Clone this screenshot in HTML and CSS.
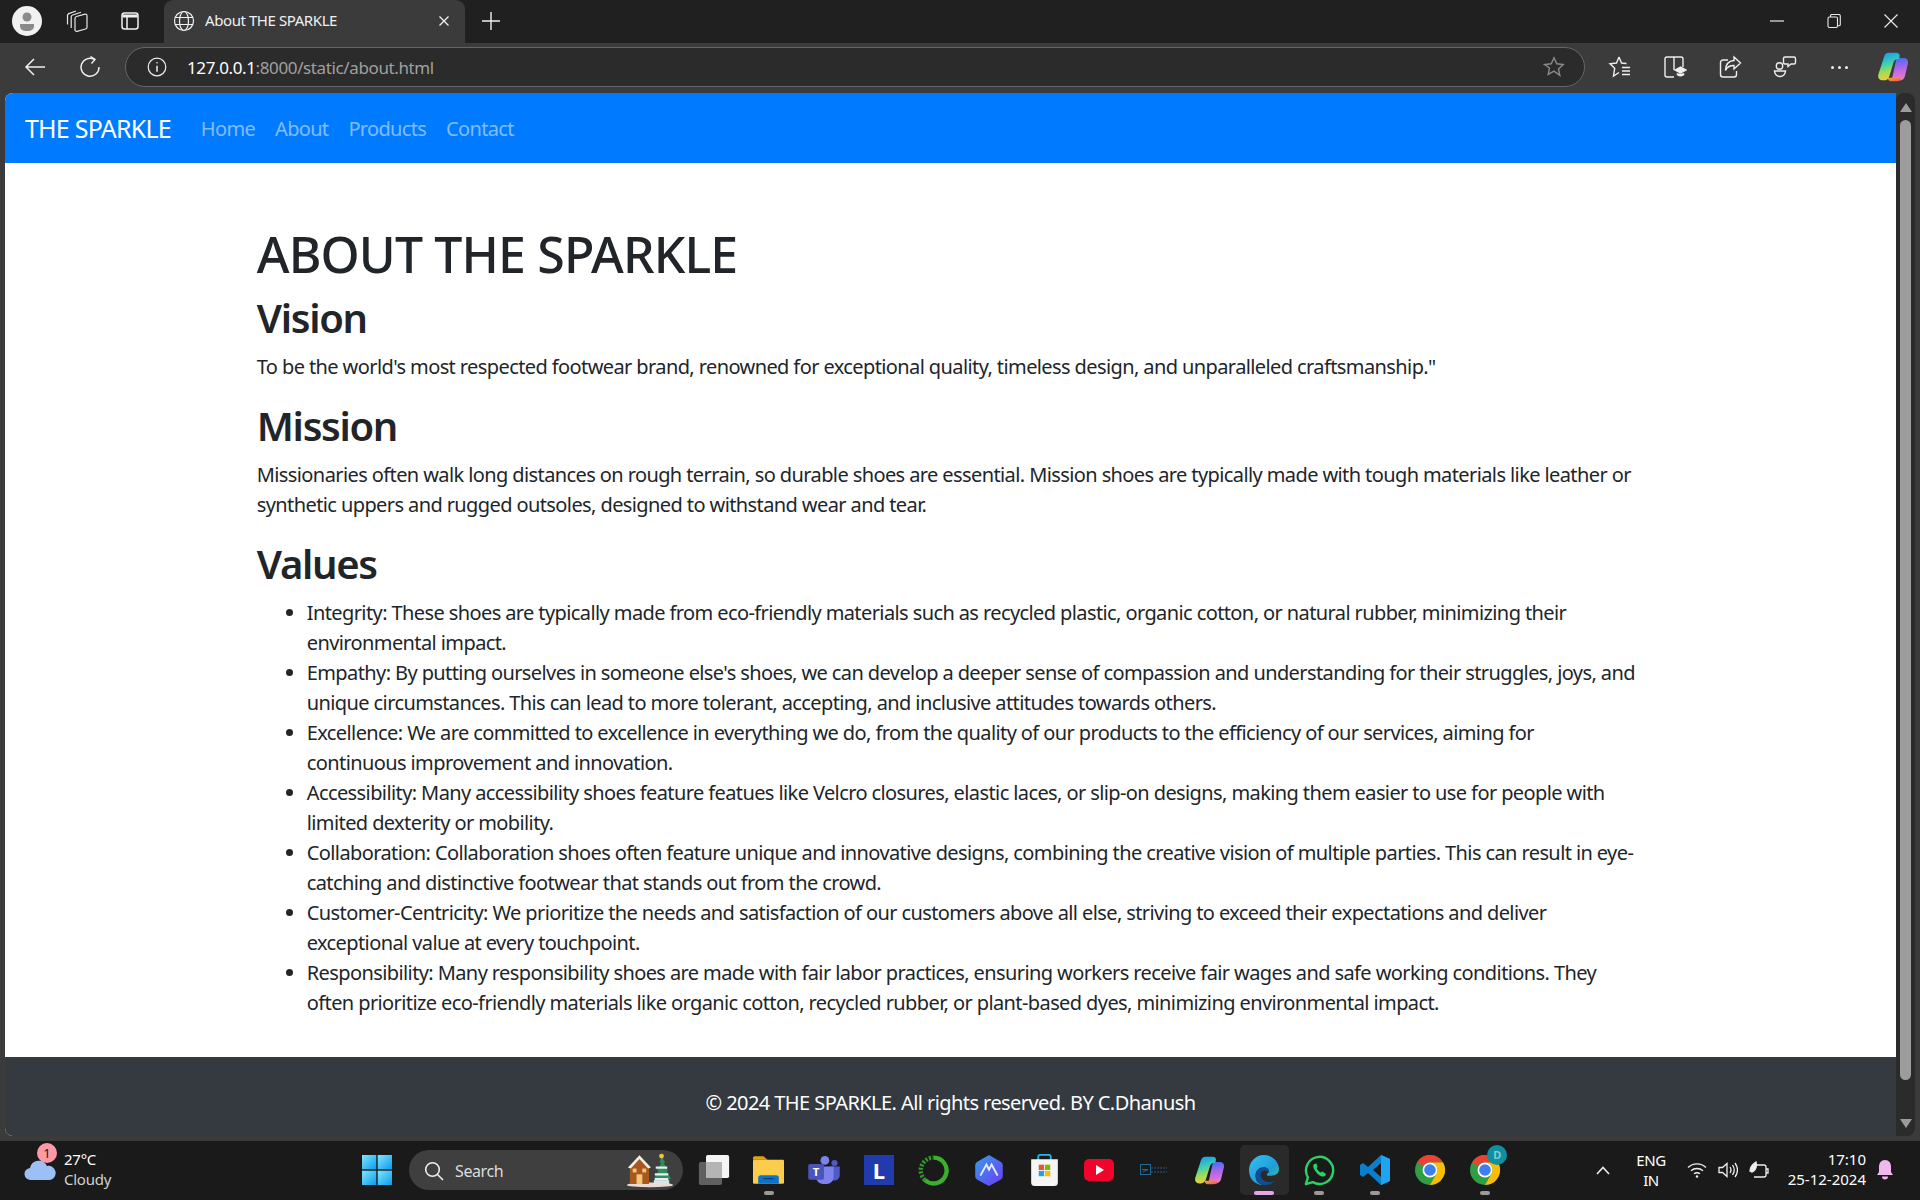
FILE: index.html
```html
<!DOCTYPE html>
<html lang="en">
<head>
<meta charset="utf-8">
<title>About THE SPARKLE</title>
<link rel="stylesheet" href="styles.css">
</head>
<body>
<svg class="defs" width="0" height="0" aria-hidden="true">
  <defs>
    <linearGradient id="cpA" x1="0.3" y1="0" x2="0.5" y2="1"><stop offset="0" stop-color="#1a9bf0"/><stop offset=".4" stop-color="#3fd0b0"/><stop offset=".7" stop-color="#a6dc50"/><stop offset="1" stop-color="#f8c83a"/></linearGradient>
    <linearGradient id="cpB" x1="0.5" y1="0" x2="0.6" y2="1"><stop offset="0" stop-color="#4a6cf0"/><stop offset=".5" stop-color="#b866e8"/><stop offset="1" stop-color="#f07fc0"/></linearGradient>
    <linearGradient id="cpC" x1="0" y1="0" x2="1" y2="1"><stop offset="0" stop-color="#f7a73a"/><stop offset="1" stop-color="#f0504f"/></linearGradient>
    <linearGradient id="edgeA" x1="0" y1="0" x2="1" y2="1"><stop offset="0" stop-color="#35c1f1"/><stop offset=".6" stop-color="#1f9cd8"/><stop offset="1" stop-color="#3bd27f"/></linearGradient>
    <linearGradient id="winG" x1="0" y1="0" x2="1" y2="1"><stop offset="0" stop-color="#7fe7fb"/><stop offset="1" stop-color="#0a9bf0"/></linearGradient>
    <linearGradient id="hexG" x1="0" y1="0" x2="1" y2="1"><stop offset="0" stop-color="#3a9bf0"/><stop offset="1" stop-color="#6a3cf0"/></linearGradient>
    <symbol id="copilot" viewBox="0 0 36 36">
      <path d="M22 8h8c3.500 0 5.500 2.500 4.800 6l-3.300 14c-.7 3-3 5-6 5h-9z" fill="url(#cpB)"/>
      <path d="M12 30h13c2 0 2.500 3 .5 3.500-1 .3-2 .5-3 .5h-7c-2 0-3-2-3.500-4z" fill="url(#cpC)"/>
      <path d="M13 2h9c2.500 0 3.500 1.500 3.500 3.500 0 1-.5 2.500-1 3.500-3-.5-5 1-6 4l-4.500 15c-.8 3-3 5-6 5H6c-3.500 0-5.500-3-4.500-6.500L8 6.500C8.800 3.500 10.500 2 13 2z" fill="url(#cpA)"/>
    </symbol>
    <symbol id="chrome" viewBox="0 0 30 30">
      <circle cx="15" cy="15" r="15" fill="#2f9e44"/>
      <path d="M15 0a15 15 0 0 1 13 7.500H15a7.500 7.500 0 0 0-6.500 3.750L2 7.500A15 15 0 0 1 15 0z" fill="#ea4335"/>
      <path d="M28 7.500A15 15 0 0 1 15 30l6.500-11.250A7.500 7.500 0 0 0 15 7.500z" fill="#fbbc04"/>
      <circle cx="15" cy="15" r="7.500" fill="#fff"/>
      <circle cx="15" cy="15" r="5.800" fill="#3b7ff0"/>
    </symbol>
  </defs>
</svg>

<div class="tabbar">
  <div class="tab-left">
    <span class="avatar"><svg viewBox="0 0 30 30" width="30" height="30"><circle cx="15" cy="15" r="15" fill="#f1f1f1"/><circle cx="15" cy="11" r="4.500" fill="#8a8a8a"/><path d="M8 18h14v2a5 5 0 0 1-5 5h-4a5 5 0 0 1-5-5z" fill="#8a8a8a"/></svg></span>
    <span class="tb-btn coll"><svg viewBox="0 0 24 24" width="24" height="24" fill="none" stroke="#e6e6e6" stroke-width="1.200"><path d="M10 9.500a2 2 0 0 1 1.500-2L20 5.200a1.500 1.500 0 0 1 2 1.500V18a2 2 0 0 1-1.500 2L12 22.300a1.500 1.500 0 0 1-2-1.500z"/><path d="M6.200 19V8a2 2 0 0 1 1.500-2L16 3.200"/><path d="M2.500 15.500V6.500a2 2 0 0 1 1.300-1.900L11 2"/></svg></span>
    <span class="tb-btn vtabs"><svg viewBox="0 0 20 20" width="20" height="20" fill="none" stroke="#f0f0f0" stroke-width="1.500"><rect x="2" y="2" width="16" height="16" rx="2.500"/><path d="M2.500 5h15" stroke-width="3"/><path d="M7 6v12"/></svg></span>
  </div>
  <div class="tab">
    <svg class="globe" viewBox="0 0 22 22" width="22" height="22" fill="none" stroke="#f0f0f0" stroke-width="1.200"><circle cx="11" cy="11" r="9.500"/><ellipse cx="11" cy="11" rx="4.500" ry="9.500"/><path d="M2 7.500h18M2 14.500h18"/></svg>
    <span class="tab-title">About THE SPARKLE</span>
    <svg class="tab-x" viewBox="0 0 12 12" width="12" height="12" stroke="#f0f0f0" stroke-width="1.300"><path d="M1.500 1.500l9 9M10.500 1.500l-9 9"/></svg>
  </div>
  <svg class="new-tab" viewBox="0 0 18 18" width="18" height="18" stroke="#f0f0f0" stroke-width="1.400"><path d="M9 0v18M0 9h18"/></svg>
  <div class="win-ctrl">
    <svg viewBox="0 0 14 14" width="14" height="14" stroke="#e8e8e8" stroke-width="1.200"><path d="M0 7h14"/></svg>
    <svg viewBox="0 0 14 14" width="14" height="14" fill="none" stroke="#e8e8e8" stroke-width="1.100"><rect x="1" y="3" width="9.500" height="10.500" rx="1.500"/><path d="M3.500 3V1.800A1.300 1.300 0 0 1 4.800.5h7a1.500 1.500 0 0 1 1.500 1.500v8.500a1.300 1.300 0 0 1-1.300 1.300h-1.500"/></svg>
    <svg viewBox="0 0 14 14" width="14" height="14" stroke="#e8e8e8" stroke-width="1.200"><path d="M.5.500l13 13M13.500.500l-13 13"/></svg>
  </div>
</div>

<div class="toolbar">
  <svg class="back" viewBox="0 0 22 22" width="22" height="22" fill="none" stroke="#f0f0f0" stroke-width="1.500"><path d="M21 11H2M10 3l-8 8 8 8"/></svg>
  <svg class="reload" viewBox="0 0 22 22" width="22" height="22" fill="none" stroke="#f0f0f0" stroke-width="1.400"><path d="M15.500 3.500A9 9 0 1 0 20 11"/><path d="M11.500.500l4.500 3-3.500 4"/></svg>
  <div class="address">
    <svg class="info" viewBox="0 0 20 20" width="20" height="20" fill="none" stroke="#eee" stroke-width="1.200"><circle cx="10" cy="10" r="8.800"/><path d="M10 8.800v6" stroke-width="1.500"/><circle cx="10" cy="5.800" r=".8" fill="#eee" stroke="none"/></svg>
    <span class="url"><span class="url-host">127.0.0.1</span>:8000/static/about.html</span>
    <svg class="star" viewBox="0 0 22 22" width="22" height="22" fill="none" stroke="#8a8a8a" stroke-width="1.400"><path d="M11 1.800l2.800 6 6.400.8-4.700 4.400 1.300 6.400L11 15.200 5.200 18.400l1.300-6.400L1.800 8.600l6.400-.8z"/></svg>
  </div>
  <div class="tools">
    <svg viewBox="0 0 24 24" width="24" height="24" fill="none" stroke="#eee" stroke-width="1.400"><path d="M11 2l2.500 6 5 .5M11 2L8.500 8 2 8.800l4.700 4.400L5.500 21 11 17.500"/><path d="M14 12.500h8M14 16h8M14 19.500h8"/></svg>
    <svg viewBox="0 0 24 24" width="24" height="24" fill="none" stroke="#eee" stroke-width="1.400"><path d="M11 22H4a2 2 0 0 1-2-2V4a2 2 0 0 1 2-2h14a2 2 0 0 1 2 2v8M11 2v13"/><path d="M12 15l5.500-3 5.500 3-5.500 3z" fill="#eee"/><path d="M14 18.500c1 3 6 3 7 0" fill="#eee"/></svg>
    <svg viewBox="0 0 24 24" width="24" height="24" fill="none" stroke="#eee" stroke-width="1.400"><path d="M10 5H5a2.500 2.500 0 0 0-2.500 2.500v12A2.500 2.500 0 0 0 5 22h11a2.500 2.500 0 0 0 2.500-2.500V16"/><path d="M16 2l6.500 6-6.500 6v-3.500c-4 0-7 1-8.500 5 0-6 3-9.500 8.500-10z"/></svg>
    <svg viewBox="0 0 24 24" width="24" height="24" fill="none" stroke="#eee" stroke-width="1.400"><circle cx="6.500" cy="11" r="3.200"/><path d="M1.500 16h11a5.500 5.500 0 0 1-11 0zM12 2h9a1.500 1.500 0 0 1 1.500 1.500v4A1.500 1.500 0 0 1 21 9h-3l-3 2.500V9h-3a1.500 1.500 0 0 1-1.500-1.500v-4A1.500 1.500 0 0 1 12 2z"/></svg>
    <span class="dots"><i></i><i></i><i></i></span>
    <svg class="copilot" width="32" height="32"><use href="#copilot"/></svg>
  </div>
</div>

<div class="viewport">
  <div class="page">
    <nav class="navbar">
      <a class="brand">THE SPARKLE</a>
      <a class="nav-link">Home</a>
      <a class="nav-link">About</a>
      <a class="nav-link">Products</a>
      <a class="nav-link">Contact</a>
    </nav>
    <main class="container">
      <h1>ABOUT THE SPARKLE</h1>
      <h2>Vision</h2>
      <p>To be the world's most respected footwear brand, renowned for exceptional quality, timeless design, and unparalleled craftsmanship."</p>
      <h2>Mission</h2>
      <p>Missionaries often walk long distances on rough terrain, so durable shoes are essential. Mission shoes are typically made with tough materials like leather or synthetic uppers and rugged outsoles, designed to withstand wear and tear.</p>
      <h2>Values</h2>
      <ul>
        <li>Integrity: These shoes are typically made from eco-friendly materials such as recycled plastic, organic cotton, or natural rubber, minimizing their environmental impact.</li>
        <li>Empathy: By putting ourselves in someone else's shoes, we can develop a deeper sense of compassion and understanding for their struggles, joys, and unique circumstances. This can lead to more tolerant, accepting, and inclusive attitudes towards others.</li>
        <li>Excellence: We are committed to excellence in everything we do, from the quality of our products to the efficiency of our services, aiming for continuous improvement and innovation.</li>
        <li>Accessibility: Many accessibility shoes feature featues like Velcro closures, elastic laces, or slip-on designs, making them easier to use for people with limited dexterity or mobility.</li>
        <li>Collaboration: Collaboration shoes often feature unique and innovative designs, combining the creative vision of multiple parties. This can result in eye-catching and distinctive footwear that stands out from the crowd.</li>
        <li>Customer-Centricity: We prioritize the needs and satisfaction of our customers above all else, striving to exceed their expectations and deliver exceptional value at every touchpoint.</li>
        <li>Responsibility: Many responsibility shoes are made with fair labor practices, ensuring workers receive fair wages and safe working conditions. They often prioritize eco-friendly materials like organic cotton, recycled rubber, or plant-based dyes, minimizing environmental impact.</li>
      </ul>
    </main>
    <footer class="footer">© 2024 THE SPARKLE. All rights reserved. BY C.Dhanush</footer>
  </div>
  <div class="scrollbar">
    <span class="arrow-up"></span>
    <span class="thumb"></span>
    <span class="arrow-down"></span>
  </div>
</div>

<div class="taskbar">
  <div class="weather">
    <span class="cloud-wrap">
      <svg viewBox="0 0 32 24" width="32" height="24"><path d="M7 22a6 6 0 0 1-1-12 9 9 0 0 1 17-2 7 7 0 0 1 3 14z" fill="#9cc0f5"/></svg>
      <span class="badge">1</span>
    </span>
    <span class="weather-text"><span class="temp">27°C</span><span class="cond">Cloudy</span></span>
  </div>
  <div class="center">
    <svg class="win" viewBox="0 0 30 30" width="30" height="30"><rect width="14.300" height="14.300" fill="url(#winG)"/><rect x="15.700" width="14.300" height="14.300" fill="url(#winG)"/><rect y="15.700" width="14.300" height="14.300" fill="url(#winG)"/><rect x="15.700" y="15.700" width="14.300" height="14.300" fill="url(#winG)"/></svg>
    <div class="search">
      <svg viewBox="0 0 20 20" width="20" height="20" fill="none" stroke="#eee" stroke-width="1.600"><circle cx="8.500" cy="8.500" r="6.800"/><path d="M13.500 13.500l5.500 5.500"/></svg>
      <span class="search-text">Search</span>
      <svg class="xmas" viewBox="0 0 50 36" width="48" height="35"><ellipse cx="25" cy="33" rx="24" ry="2.500" fill="#e8dcd8"/><path d="M4 14L14 3l10 11v18H4z" fill="#a8581f"/><path d="M2 15L14 2l12 13-3 1-9-10-9 10z" fill="#eef0ea"/><rect x="11" y="22" width="6" height="10" fill="#f4c77a"/><rect x="7" y="16" width="4" height="4" fill="#f4c77a"/><rect x="17" y="16" width="4" height="4" fill="#f4c77a"/><path d="M37 3l4 7h-2l5 8h-2l5 9H29l5-9h-2l5-8h-2z" fill="#2f8f5a"/><path d="M31 15h12M30 22h14M30 27h14" stroke="#e5eef0" stroke-width="2.500"/><circle cx="37" cy="3" r="2.500" fill="#f2c33a"/><rect x="29" y="28" width="16" height="4" fill="#d8e6ea"/></svg>
    </div>
    <div class="apps">
      <span class="app"><svg viewBox="0 0 36 36" width="32" height="32"><rect x="1" y="9" width="26" height="26" rx="2" fill="#5f5f5f"/><rect x="9" y="1" width="26" height="26" rx="2" fill="#f4f4f4"/><rect x="9" y="9" width="18" height="18" fill="#b4b4b4"/></svg></span>
      <span class="app"><svg viewBox="0 0 36 32" width="31" height="28"><path d="M0 2a2 2 0 0 1 2-2h10l5 4H0z" fill="#dba31a"/><rect y="4" width="36" height="28" rx="1.500" fill="#fccc4d"/><path d="M6 32v-7a3 3 0 0 1 3-3h18a3 3 0 0 1 3 3v7z" fill="#0a74c8"/><path d="M12 26h12" stroke="#063f78" stroke-width="1.500"/></svg><i class="pip"></i></span>
      <span class="app"><svg viewBox="0 0 36 32" width="32" height="28"><circle cx="19" cy="5" r="5" fill="#7b83eb"/><circle cx="30" cy="8" r="3.500" fill="#5059c9"/><path d="M25 12h11v10a6 6 0 0 1-6 6h-5z" fill="#5059c9"/><path d="M9 12h20v12a8 8 0 0 1-8 8h-4a8 8 0 0 1-8-8z" fill="#7b83eb"/><rect y="9" width="18" height="18" rx="2" fill="#4b53bc"/><text class="teams-t" x="9" y="23">T</text></svg></span>
      <span class="app"><span class="app-l">L</span></span>
      <span class="app"><svg viewBox="0 0 36 36" width="31" height="31" fill="none"><path d="M18 3a15 15 0 1 1-10 26" stroke="#3ab02e" stroke-width="5"/><path d="M8 29A15 15 0 0 1 18 3" stroke="#2f9a2a" stroke-width="5" stroke-dasharray="2.500 1.800"/></svg></span>
      <span class="app"><svg viewBox="0 0 32 36" width="28" height="31"><path d="M16 0l13 7.500q3 1.500 3 4V25q0 2.500-3 4L16 36 3 29q-3-1.500-3-4V11.500q0-2.500 3-4z" fill="url(#hexG)"/><path d="M6 24L13 11l3 6 3-6 7 13" fill="none" stroke="#e8ecff" stroke-width="2.200"/></svg></span>
      <span class="app"><svg viewBox="0 0 30 36" width="27" height="32"><path d="M8 8V3a2 2 0 0 1 2-2h10a2 2 0 0 1 2 2v5" fill="none" stroke="#27b5ea" stroke-width="2"/><path d="M0 6h30v26a4 4 0 0 1-4 4H4a4 4 0 0 1-4-4z" fill="#f6f6f6"/><rect x="8.500" y="12" width="6" height="6" fill="#e25a2a"/><rect x="15.500" y="12" width="6" height="6" fill="#7fba00"/><rect x="8.500" y="19" width="6" height="6" fill="#1ea2ea"/><rect x="15.500" y="19" width="6" height="6" fill="#ffb900"/></svg></span>
      <span class="app"><svg viewBox="0 0 30 22" width="30" height="22"><rect width="30" height="22" rx="5" fill="#f0042c"/><path d="M12 6l8 5-8 5z" fill="#fff"/></svg></span>
      <span class="app"><svg viewBox="0 0 28 12" width="28" height="12" fill="none" stroke="#1f6a96" stroke-width="1"><rect x=".5" y=".5" width="10" height="10"/><path d="M2 5.500h6M3 8l5-2.500"/><path d="M11 4h16M11 8h16" stroke="#27364a" stroke-width="2" stroke-dasharray="2 1"/></svg></span>
      <span class="app"><svg width="31" height="31"><use href="#copilot"/></svg></span>
      <span class="app app-active"><svg viewBox="0 0 32 32" width="30" height="30"><path d="M16 0a16 16 0 0 1 16 15c0 5-4 7-8 7h-3c-2 0-3-1-1-2.500 3-2.500 0-7-5-6.500-5 .5-8 4-8 9C7 28 11 31 15 32 6 32 0 25 0 16A16 16 0 0 1 16 0z" fill="url(#edgeA)"/><path d="M15 32c-5-1-8-4-8-9.500 0-5 3-8.500 8-9 5-.5 6 2.500 5 4-5-2-8 1-7.500 5 .5 4 5 6.500 9 6.500 2.500 0 4-.5 6-1.500-2.500 3-7 5-12.500 4.500z" fill="#0c4f96"/></svg><i class="pip pip-active"></i></span>
      <span class="app"><svg viewBox="0 0 32 32" width="31" height="31" fill="none"><path d="M2 30l2-7A14 14 0 1 1 9 28z" stroke="#25d366" stroke-width="2.500" stroke-linejoin="round"/><path d="M11 9c-2 1-2 4 1 8 3 4 6 6 9 5 2-1 2-3 1-3l-3-2-2 1c-2-1-3-3-4-4l1-2-1-3z" fill="#25d366"/></svg><i class="pip"></i></span>
      <span class="app"><svg viewBox="0 0 30 30" width="30" height="30"><path d="M21 0l9 4v22l-9 4L8 18l-5 4-3-2v-10l3-2 5 4z" fill="#0a7fcf"/><path d="M21 0l9 4v22l-9 4z" fill="#20a4ef"/><path d="M21 8l-8 7 8 7z" fill="#1a1a1a"/></svg><i class="pip"></i></span>
      <span class="app"><svg width="30" height="30"><use href="#chrome"/></svg></span>
      <span class="app"><svg width="30" height="30"><use href="#chrome"/></svg><span class="profile-badge">D</span><i class="pip"></i></span>
    </div>
  </div>
  <div class="tray">
    <svg class="chev" viewBox="0 0 14 9" width="14" height="9" fill="none" stroke="#eee" stroke-width="1.600"><path d="M1 8l6-6.500L13 8"/></svg>
    <span class="lang"><span>ENG</span><span>IN</span></span>
    <span class="tray-icons">
      <svg viewBox="0 0 20 16" width="20" height="16" fill="none" stroke="#eee" stroke-width="1.400"><path d="M1 5.500a13 13 0 0 1 18 0M4 8.800a9 9 0 0 1 12 0M7 11.800a5 5 0 0 1 6 0"/><circle cx="10" cy="14.500" r="1.200" fill="#eee" stroke="none"/></svg>
      <svg viewBox="0 0 20 18" width="20" height="18" fill="none" stroke="#eee" stroke-width="1.300"><path d="M1 6.500h3.500L9 2.500v13l-4.500-4H1z"/><path d="M12 6q2 3 0 6M14.500 4q3.500 5 0 10M17 2q5 7 0 14"/></svg>
      <svg viewBox="0 0 20 18" width="20" height="18" fill="none" stroke="#eee" stroke-width="1.300"><path d="M7 4h8a2 2 0 0 1 2 2v8a2 2 0 0 1-2 2H5M17 8h2v4h-2"/><path d="M1 10c0-4 3-7 6-9 1 4 0 9-4 10z" fill="#eee"/></svg>
    </span>
    <span class="clock"><span>17:10</span><span>25-12-2024</span></span>
    <svg class="bell" viewBox="0 0 16 20" width="16" height="20"><path d="M8 0c4 0 6 3 6 7v5l2 3H0l2-3V7c0-4 2-7 6-7z" fill="#efb8ef"/><path d="M5 16.500h6a3 3 0 0 1-6 0z" fill="#efb8ef"/></svg>
  </div>
</div>
</body>
</html>
```
FILE: styles.css
```css
* { box-sizing: border-box; }
html, body { margin: 0; padding: 0; height: 100%; }
body {
  width: 1920px;
  height: 1200px;
  overflow: hidden;
  display: flex;
  flex-direction: column;
  background: #1a1a1a;
  font-family: "Noto Sans", "Open Sans", sans-serif;
}
svg { display: block; flex: none; }
.defs { position: absolute; }

/* tab strip */
.tabbar {
  height: 43px;
  background: #202020;
  display: flex;
  align-items: center;
  padding-bottom: 1px;
  color: #f0f0f0;
}
.tab-left { display: flex; align-items: center; padding-left: 12px; width: 164px; }
.tb-btn { display: block; }
.coll { margin-left: 23px; }
.vtabs { margin-left: 31px; }
.tab {
  width: 301px;
  height: 43px;
  margin-bottom: -1px;
  padding: 0 15px 1px 9px;
  background: #3b3b3b;
  border-radius: 9px 9px 0 0;
  display: flex;
  align-items: center;
}
.tab-title { flex: 1; margin: 0 0 2px 10px; font-size: 15px; letter-spacing: -.42px; white-space: nowrap; }
.new-tab { margin-left: 17px; }
.win-ctrl { margin-left: auto; display: flex; gap: 43px; padding-right: 22px; align-items: center; }

/* toolbar */
.toolbar {
  height: 50px;
  padding-bottom: 2px;
  background: #3b3b3b;
  display: flex;
  align-items: center;
}
.back { margin-left: 24px; }
.reload { margin-left: 33px; }
.address {
  margin-left: 24px;
  width: 1460px;
  height: 40px;
  background: #2b2b2b;
  border: 1px solid #666;
  border-radius: 20px;
  display: flex;
  align-items: center;
  padding: 0 19px 0 21px;
}
.url { flex: 1; margin-left: 20px; font-size: 17px; letter-spacing: -.38px; color: #a0a0a0; white-space: nowrap; }
.url-host { color: #fff; }
.tools { display: flex; align-items: center; gap: 31px; margin-left: 23px; }
.dots { display: flex; gap: 4px; width: 24px; justify-content: center; margin-left: -1px; }
.dots i { width: 3px; height: 3px; background: #eee; border-radius: 50%; }
.copilot { margin-left: -5px; }

/* browser viewport */
.viewport {
  flex: 1;
  min-height: 0;
  background: #3b3b3b;
  display: flex;
  padding: 0 5px 5px 5px;
}
.page {
  width: 1891px;
  background: #fff;
  display: flex;
  flex-direction: column;
  border-radius: 8px 0 0 8px;
  overflow: hidden;
  color: #212529;
}
.navbar {
  height: 70px;
  flex: none;
  background: #007bff;
  display: flex;
  align-items: center;
  padding: 0 20px;
}
.brand { font-size: 25px; color: #fff; margin-right: 20px; letter-spacing: -.78px; }
.nav-link { font-size: 20px; color: rgba(255,255,255,.5); padding: 0 10px; letter-spacing: -.68px; }
.container {
  flex: 1;
  width: 1425px;
  margin: 0 auto;
  padding: 61px 18.75px 0;
  font-size: 20px;
  line-height: 30px;
  letter-spacing: -.6px;
}
h1 { margin: 0 0 10px; font-size: 50px; line-height: 60px; font-weight: 500; letter-spacing: -.85px; }
h2 { margin: 0 0 10px; font-size: 40px; line-height: 48px; font-weight: 600; letter-spacing: -1.3px; }
p { margin: 0 0 20px; }
ul { margin: 0; padding: 0 8px 0 50px; }
.footer {
  height: 79px;
  flex: none;
  background: #343a40;
  color: #fff;
  display: flex;
  align-items: center;
  justify-content: center;
  padding: 0 0 1px;
  padding-top: 13px;
  font-size: 20px;
  letter-spacing: -.57px;
}
.scrollbar {
  width: 19px;
  background: #2b2b2b;
  border-radius: 8px 8px 8px 0;
  display: flex;
  flex-direction: column;
  align-items: center;
  padding: 10px 0 8px;
}
.arrow-up, .arrow-down { width: 0; height: 0; border-left: 6px solid transparent; border-right: 6px solid transparent; }
.arrow-up { border-bottom: 9px solid #9c9c9c; }
.arrow-down { border-top: 9px solid #9c9c9c; }
.thumb { flex: none; height: 960px; width: 11px; margin-top: 8px; margin-bottom: auto; border-radius: 6px; background: #9c9c9c; }

/* taskbar */
.taskbar {
  height: 59px;
  flex: none;
  padding-bottom: 1px;
  background: #1a1a1a;
  display: flex;
  align-items: center;
  color: #fff;
  font-size: 15px;
}
.weather { width: 362px; display: flex; align-items: center; padding-left: 24px; }
.cloud-wrap { position: relative; display: block; }
.badge {
  position: absolute;
  left: 13px;
  top: -15px;
  width: 20px;
  height: 20px;
  border-radius: 50%;
  background: #ff99a4;
  color: #1a1a1a;
  font-size: 13px;
  line-height: 20px;
  text-align: center;
}
.weather-text { display: flex; flex-direction: column; margin: 0 0 2px 8px; line-height: 20px; letter-spacing: -.25px; }
.temp { color: #fff; }
.cond { color: #d0d0d0; }
.center { display: flex; align-items: center; width: 1208px; }
.search {
  margin-left: 17px;
  width: 274px;
  height: 40px;
  border-radius: 20px;
  background: #3f3f3f;
  display: flex;
  align-items: center;
  padding: 1px 9px 0 15px;
  margin-right: 3px;
}
.search-text { flex: 1; margin-left: 11px; font-size: 16px; color: #ddd; letter-spacing: -.4px; }
.apps { display: flex; }
.app {
  position: relative;
  width: 55.1px;
  height: 50px;
  display: flex;
  align-items: center;
  justify-content: center;
}
.app-l {
  width: 30px;
  height: 30px;
  background: #1f3bad;
  color: #fff;
  font: 700 22px/30px "Noto Sans", sans-serif;
  text-align: center;
}
.teams-t { fill: #fff; font: 700 13px "Noto Sans", sans-serif; text-anchor: middle; }
.app-active { width: 49px; margin: 0 3px; background: #2a2a2a; border-radius: 5px; }
.pip { position: absolute; left: 50%; bottom: 0; width: 10px; height: 4px; margin-left: -5px; border-radius: 2px; background: #9a9a9a; }
.pip-active { width: 20px; margin-left: -10px; background: #e0a8e8; }
.profile-badge {
  position: absolute;
  left: 30px;
  top: 0;
  width: 20px;
  height: 20px;
  border-radius: 50%;
  background: #0f8f9f;
  color: #7fd0d8;
  font-size: 11px;
  font-weight: 700;
  line-height: 20px;
  text-align: center;
}
.tray { display: flex; align-items: center; }
.chev { margin-left: 26px; }
.lang { display: flex; flex-direction: column; align-items: center; margin-left: 23px; width: 36px; line-height: 20px; letter-spacing: -.4px; }
.tray-icons { display: flex; align-items: center; gap: 11px; margin-left: 18px; }
.clock { display: flex; flex-direction: column; align-items: flex-end; margin: 0 0 2px 17px; width: 80px; line-height: 20px; letter-spacing: 0; }
.bell { margin-left: 11px; }
```
